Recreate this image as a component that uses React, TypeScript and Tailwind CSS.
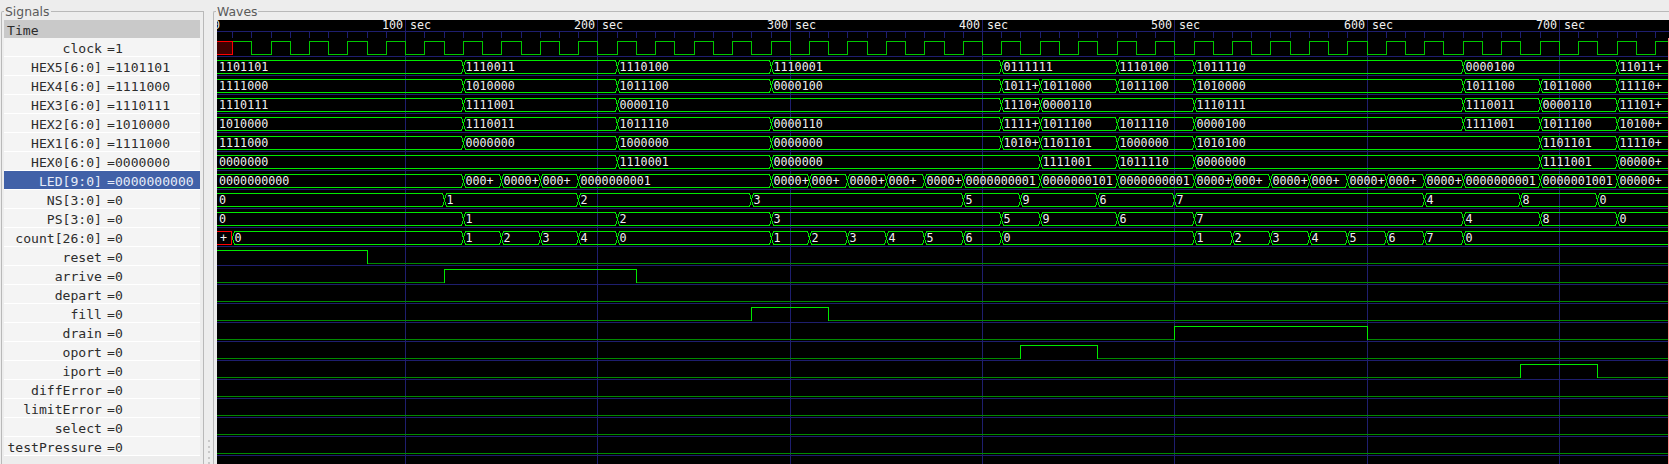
import React from "react";

const xOf = (t: number) => Math.round(212.9 + 1.9228 * t) - 217;
const rowTop = (n: number) => 41 + 19 * n - 20;

type Seg = [number, string];

const signals: { name: string; value: string; selected?: boolean }[] = [
  { name: "clock", value: "1" },
  { name: "HEX5[6:0]", value: "1101101" },
  { name: "HEX4[6:0]", value: "1111000" },
  { name: "HEX3[6:0]", value: "1110111" },
  { name: "HEX2[6:0]", value: "1010000" },
  { name: "HEX1[6:0]", value: "1111000" },
  { name: "HEX0[6:0]", value: "0000000" },
  { name: "LED[9:0]", value: "0000000000", selected: true },
  { name: "NS[3:0]", value: "0" },
  { name: "PS[3:0]", value: "0" },
  { name: "count[26:0]", value: "0" },
  { name: "reset", value: "0" },
  { name: "arrive", value: "0" },
  { name: "depart", value: "0" },
  { name: "fill", value: "0" },
  { name: "drain", value: "0" },
  { name: "oport", value: "0" },
  { name: "iport", value: "0" },
  { name: "diffError", value: "0" },
  { name: "limitError", value: "0" },
  { name: "select", value: "0" },
  { name: "testPressure", value: "0" },
];

const buses: { row: number; segs: Seg[] }[] = [
  { row: 1, segs: [[0, "1101101"], [130, "1110011"], [210, "1110100"], [290, "1110001"], [410, "0111111"], [470, "1110100"], [510, "1011110"], [650, "0000100"], [730, "11011+"]] },
  { row: 2, segs: [[0, "1111000"], [130, "1010000"], [210, "1011100"], [290, "0000100"], [410, "1011+"], [430, "1011000"], [470, "1011100"], [510, "1010000"], [650, "1011100"], [690, "1011000"], [730, "11110+"]] },
  { row: 3, segs: [[0, "1110111"], [130, "1111001"], [210, "0000110"], [410, "1110+"], [430, "0000110"], [510, "1110111"], [650, "1110011"], [690, "0000110"], [730, "11101+"]] },
  { row: 4, segs: [[0, "1010000"], [130, "1110011"], [210, "1011110"], [290, "0000110"], [410, "1111+"], [430, "1011100"], [470, "1011110"], [510, "0000100"], [650, "1111001"], [690, "1011100"], [730, "10100+"]] },
  { row: 5, segs: [[0, "1111000"], [130, "0000000"], [210, "1000000"], [290, "0000000"], [410, "1010+"], [430, "1101101"], [470, "1000000"], [510, "1010100"], [690, "1101101"], [730, "11110+"]] },
  { row: 6, segs: [[0, "0000000"], [210, "1110001"], [290, "0000000"], [430, "1111001"], [470, "1011110"], [510, "0000000"], [690, "1111001"], [730, "00000+"]] },
  { row: 7, segs: [[0, "0000000000"], [130, "000+"], [150, "0000+"], [170, "000+"], [190, "0000000001"], [290, "0000+"], [310, "000+"], [330, "0000+"], [350, "000+"], [370, "0000+"], [390, "0000000001"], [430, "0000000101"], [470, "0000000001"], [510, "0000+"], [530, "000+"], [550, "0000+"], [570, "000+"], [590, "0000+"], [610, "000+"], [630, "0000+"], [650, "0000000001"], [690, "0000001001"], [730, "00000+"]] },
  { row: 8, segs: [[0, "0"], [120, "1"], [190, "2"], [280, "3"], [390, "5"], [420, "9"], [460, "6"], [500, "7"], [630, "4"], [680, "8"], [720, "0"]] },
  { row: 9, segs: [[0, "0"], [130, "1"], [210, "2"], [290, "3"], [410, "5"], [430, "9"], [470, "6"], [510, "7"], [650, "4"], [690, "8"], [730, "0"]] },
  { row: 10, segs: [[10, "0"], [130, "1"], [150, "2"], [170, "3"], [190, "4"], [210, "0"], [290, "1"], [310, "2"], [330, "3"], [350, "4"], [370, "5"], [390, "6"], [410, "0"], [510, "1"], [530, "2"], [550, "3"], [570, "4"], [590, "5"], [610, "6"], [630, "7"], [650, "0"]] },
];

// [row, high from, high until]
const bits: [number, number, number][] = [
  [11, -10, 80],
  [12, 120, 220],
  [13, 0, 0],
  [14, 280, 320],
  [15, 500, 600],
  [16, 420, 460],
  [17, 680, 720],
  [18, 0, 0],
  [19, 0, 0],
  [20, 0, 0],
  [21, 0, 0],
];

const W = 1452;
const END_T = 760;

const Bus = ({ row, segs }: { row: number; segs: Seg[] }) => {
  const top = rowTop(row) + 0.5;
  const bottom = top + 13;
  const mid = top + 6.5;
  return (
    <g>
      {segs.map(([t, label], i) => {
        const x1 = i === 0 && t === 0 ? -3 : xOf(t) + 0.5;
        const x2 = i + 1 < segs.length ? xOf(segs[i + 1][0]) + 0.5 : W + 8;
        return (
          <g key={t}>
            <path
              d={`M${x1} ${mid}L${x1 + 2} ${top}L${x2 - 2} ${top}L${x2} ${mid}L${x2 - 2} ${bottom}L${x1 + 2} ${bottom}Z`}
              fill="none"
              stroke="#00ea00"
              shapeRendering="crispEdges"
            />
            <text x={Math.max(x1, 0) + 2} y={top + 10.8} fill="#f0f0f0">
              {label}
            </text>
          </g>
        );
      })}
    </g>
  );
};

const Waves = () => {
  const hundreds = [100, 200, 300, 400, 500, 600, 700];
  const ticks: number[] = [];
  for (let t = 10; t <= END_T; t += 10) ticks.push(t);

  let clock = `M${xOf(10) + 0.5} ${rowTop(0) + 0.5}`;
  for (let t = 20; t <= END_T; t += 10) {
    const x = xOf(t) + 0.5;
    const wasHigh = t % 20 === 0;
    clock += `L${x} ${rowTop(0) + (wasHigh ? 0.5 : 13.5)}L${x} ${rowTop(0) + (wasHigh ? 13.5 : 0.5)}`;
  }

  return (
    <svg width={W} height={444} className="block bg-black font-['DejaVu_Sans_Mono',monospace] text-[11.7px]">
      <g stroke="#1e1e6e" shapeRendering="crispEdges">
        <line x1={0} x2={W} y1={11.5} y2={11.5} />
        {ticks.map((t) => (
          <line key={t} x1={xOf(t) + 0.5} x2={xOf(t) + 0.5} y1={12} y2={18} />
        ))}
        {signals.map((_, n) => (
          <line key={n} x1={0} x2={W} y1={rowTop(n) + 15.5} y2={rowTop(n) + 15.5} />
        ))}
        {hundreds.map((t) => (
          <line key={t} x1={xOf(t) + 0.5} x2={xOf(t) + 0.5} y1={0} y2={444} />
        ))}
      </g>

      <g fill="#f0f0f0">
        <text x={-4} y={9}>0</text>
        {hundreds.map((t) => (
          <g key={t}>
            <text x={xOf(t) - 2} y={9} textAnchor="end">{t}</text>
            <text x={xOf(t) + 5} y={9}>sec</text>
          </g>
        ))}
      </g>

      {/* clock, unknown until the first edge */}
      <rect x={-2} y={rowTop(0) + 0.5} width={17.5} height={13} fill="#400000" stroke="#ff0000" shapeRendering="crispEdges" />
      <path d={clock} fill="none" stroke="#00c800" shapeRendering="crispEdges" />

      {buses.map((b) => (
        <Bus key={b.row} row={b.row} segs={b.segs} />
      ))}

      {/* count starts out red */}
      <rect x={-2} y={rowTop(10) + 0.5} width={16} height={13} fill="none" stroke="#ff0000" shapeRendering="crispEdges" />
      <text x={3} y={rowTop(10) + 11} fill="#f0f0f0">+</text>

      {bits.map(([row, from, until]) => {
        const high = rowTop(row) + 0.5;
        const low = high + 13;
        if (from === until) {
          return <line key={row} x1={0} x2={W} y1={low} y2={low} stroke="#008a00" shapeRendering="crispEdges" />;
        }
        const a = from < 0 ? -2 : xOf(from) + 0.5;
        const b = xOf(until) + 0.5;
        return (
          <g key={row} fill="none" shapeRendering="crispEdges">
            <path d={`M0 ${low}L${a} ${low}M${b} ${low}L${W} ${low}`} stroke="#008a00" />
            <path d={`M${a} ${low}L${a} ${high}L${b} ${high}L${b} ${low}`} stroke="#00e800" />
          </g>
        );
      })}

      <line x1={W - 0.5} x2={W - 0.5} y1={18} y2={444} stroke="#ff8a8a" shapeRendering="crispEdges" />
    </svg>
  );
};

const FrameTitle = ({ children }: { children: string }) => (
  <span className="absolute left-[2px] top-[-7px] bg-[#ededed] px-px font-['DejaVu_Sans',sans-serif] text-[12.4px] leading-[14px] text-[#5a5a5a]">
    {children}
  </span>
);

const SignalRow = ({ name, value, selected }: { name: string; value: string; selected?: boolean }) => (
  <div
    className={`flex h-[19px] items-center border-b border-white pt-[2px] leading-[17px] ${
      selected ? "bg-[#4161a8] text-[#e6ecf8]" : "bg-[#f4f4f4] text-[#2c2c2c]"
    }`}
  >
    <span className="w-[98px] text-right whitespace-nowrap">{name}</span>
    <span className="ml-[5px] whitespace-nowrap">={value}</span>
  </div>
);

export default function App() {
  return (
    <div className="flex h-[464px] w-[1669px] overflow-hidden bg-[#ededed]">
      {/* Signals pane */}
      <div className="relative ml-px mt-[11px] h-[453px] w-[203px] shrink-0 rounded-tl-[2px] border-x border-t border-[#b9b9b9] pl-[2px] pr-[3px] pt-[8px]">
        <FrameTitle>Signals</FrameTitle>
        <div className="font-['DejaVu_Sans_Mono',monospace] text-[13.1px]">
          <div className="h-[18px] bg-[#c9c9c9] pl-[3px] pt-[2px] leading-[17px] text-[#2c2c2c]">Time</div>
          {signals.map((s) => (
            <SignalRow key={s.name} {...s} />
          ))}
        </div>
      </div>

      {/* Pane handle */}
      <div className="flex w-[9px] shrink-0 flex-col items-center gap-[3.5px] pt-[440px]">
        {[0, 1, 2, 3, 4].map((i) => (
          <div key={i} className="h-[2px] w-[2px] shrink-0 bg-[#c8c8c8]" />
        ))}
      </div>

      {/* Waves pane */}
      <div className="relative mt-[11px] h-[453px] grow rounded-tl-[2px] border-l border-t border-[#b9b9b9] pl-[3px] pt-[8px]">
        <FrameTitle>Waves</FrameTitle>
        <Waves />
      </div>
    </div>
  );
}
